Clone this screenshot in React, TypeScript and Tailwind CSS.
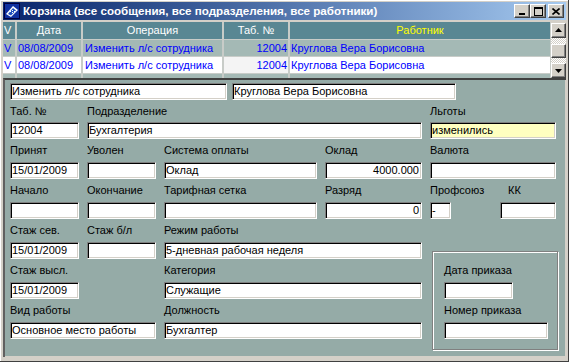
import clsx from 'clsx';
import type { ReactNode } from 'react';

function Field({
  children,
  className,
  right,
  yellow,
}: {
  children?: ReactNode;
  className?: string;
  right?: boolean;
  yellow?: boolean;
}) {
  return (
    <div
      className={clsx(
        'h-[17px] overflow-hidden whitespace-nowrap border border-t-[#808080] border-l-[#808080] border-r-white border-b-white pl-[1px] pr-[2px] text-[11px] leading-[15px] text-black shadow-[inset_1px_1px_0_#000,inset_-1px_-1px_0_#d4d0c8]',
        yellow ? 'bg-[#ffffc0]' : 'bg-white',
        right && 'text-right',
        className,
      )}
    >
      {children}
    </div>
  );
}

function Label({ children, className }: { children?: ReactNode; className?: string }) {
  return (
    <div className={clsx('flex items-center whitespace-nowrap text-[11px] leading-[13px] text-black', className)}>
      {children}
    </div>
  );
}

function TitleButton({ children }: { children: ReactNode }) {
  return (
    <div className="flex h-[14px] w-[16px] items-center justify-center border border-t-white border-l-white border-r-[#404040] border-b-[#404040] bg-[#d4d0c8] shadow-[inset_-1px_-1px_0_#808080]">
      {children}
    </div>
  );
}

function ScrollButton({ down }: { down?: boolean }) {
  return (
    <div className="flex h-[15px] w-[15px] items-center justify-center border border-t-white border-l-white border-r-[#404040] border-b-[#404040] bg-[#d4d0c8] shadow-[inset_-1px_-1px_0_#808080]">
      <svg width="7" height="4" viewBox="0 0 7 4">
        {down ? <path d="M0 0h7L3.5 4z" fill="#000" /> : <path d="M0 4h7L3.5 0z" fill="#000" />}
      </svg>
    </div>
  );
}

const rows = [
  { selected: true },
  { selected: false },
];

export default function App() {
  return (
    <div className="flex h-[362px] w-[569px] flex-col bg-[#d4d0c8] px-[3px] pt-[2px] font-['Liberation_Sans',Arial,sans-serif] shadow-[inset_-1px_-1px_0_#404040,inset_1px_1px_0_#fff]">
      {/* title bar */}
      <div className="flex h-[18px] items-center bg-gradient-to-r from-[#0a246a] to-[#a6caf0] pl-[1px] pr-[2px]">
        <svg width="16" height="16" viewBox="0 0 16 16" className="shrink-0">
          <rect x="0" y="0" width="16" height="16" fill="#000040" />
          <rect x="1" y="1" width="14" height="14" fill="#1030a0" />
          <path d="M2 11 L9 3 L14 7 L7 14 Z" fill="#fff" />
          <path d="M4 11 L9 5 L12 7.5 L7 12.5 Z" fill="#2050c0" />
          <rect x="6" y="8" width="1" height="1" fill="#fff" />
          <rect x="8" y="7" width="1" height="1" fill="#fff" />
          <rect x="8" y="9" width="1" height="1" fill="#fff" />
          <rect x="10" y="8" width="1" height="1" fill="#fff" />
        </svg>
        <div className="ml-[3px] flex-1 whitespace-nowrap text-[11.6px] font-bold leading-[18px] text-white">
          Корзина (все сообщения, все подразделения, все работники)
        </div>
        <div className="flex items-center">
          <TitleButton>
            <div className="mt-[6px] h-[2px] w-[6px] bg-black" />
          </TitleButton>
          <TitleButton>
            <div className="h-[9px] w-[9px] border border-t-2 border-black" />
          </TitleButton>
          <div className="w-[2px]" />
          <TitleButton>
            <svg width="8" height="7" viewBox="0 0 8 7">
              <path d="M0.5 0.5 L7.5 6.5 M7.5 0.5 L0.5 6.5" stroke="#000" strokeWidth="1.6" />
            </svg>
          </TitleButton>
        </div>
      </div>

      {/* grid */}
      <div className="mt-[2px] flex h-[56px] gap-[1px] bg-[#c8ccc8]">
        <div className="grid grid-cols-[12px_64px_139px_64px_260px] grid-rows-[17px_16px_16px_4px] gap-x-[2px] gap-y-[1px] text-[11px] leading-[16px]">
          <div className="bg-[#598793] pl-[1px] leading-[17px] text-white">V</div>
          <div className="bg-[#598793] text-center leading-[17px] text-white">Дата</div>
          <div className="bg-[#598793] text-center leading-[17px] text-white">Операция</div>
          <div className="bg-[#598793] text-center leading-[17px] text-white">Таб. №</div>
          <div className="bg-[#598793] text-center leading-[17px] text-[#ffff00]">Работник</div>
          {rows.map((r, i) => (
            <div key={i} className="contents text-[#0000ff]">
              <div className={clsx('pl-[1px]', r.selected ? 'bg-[#a4b9b5]' : 'bg-white')}>V</div>
              <div className={clsx('pl-[1px]', r.selected ? 'bg-[#a4b9b5]' : 'bg-white')}>08/08/2009</div>
              <div className={clsx('whitespace-nowrap pl-[2px]', r.selected ? 'bg-[#a4b9b5]' : 'bg-white')}>
                Изменить л/с сотрудника
              </div>
              <div className={clsx('pr-[1px] text-right', r.selected ? 'bg-[#a4b9b5]' : 'bg-[#f4f4f4]')}>12004</div>
              <div className={clsx('whitespace-nowrap pl-[1px]', r.selected ? 'bg-[#a4b9b5]' : 'bg-white')}>
                Круглова Вера Борисовна
              </div>
            </div>
          ))}
          <div className="bg-[#a4b9b5]" />
          <div className="bg-[#a4b9b5]" />
          <div className="bg-[#a4b9b5]" />
          <div className="bg-[#a4b9b5]" />
          <div className="bg-[#a4b9b5]" />
        </div>
        <div className="flex w-[15px] flex-col bg-[#d4d0c8] pt-[1px]">
          <ScrollButton />
          <div className="h-[6px] bg-[repeating-conic-gradient(#d4d0c8_0_25%,#fff_0_50%)] bg-[length:2px_2px]" />
          <div className="h-[15px] border border-t-white border-l-white border-r-[#404040] border-b-[#404040] bg-[#d4d0c8] shadow-[inset_-1px_-1px_0_#808080]" />
          <div className="h-[5px] bg-[repeating-conic-gradient(#d4d0c8_0_25%,#fff_0_50%)] bg-[length:2px_2px]" />
          <ScrollButton down />
        </div>
      </div>

      {/* form */}
      <div className="flex h-[279px] flex-col border-t-2 border-l-2 border-t-[#404040] border-l-[#606060] bg-[#95aba7] pl-[5px] pt-[3px] shadow-[inset_-1px_-1px_0_#d4d0c8]">
        <div className="flex gap-[5px]">
          <Field className="w-[217px]">Изменить л/с сотрудника</Field>
          <Field className="w-[224px]">Круглова Вера Борисовна</Field>
        </div>

        <div className="grid grid-cols-[69px_69px_153px_97px_128px] grid-rows-[22px_17px_23px_17px_23px_17px_23px_17px_23px_17px_23px_17px_11px] gap-x-2">
          <Label>Таб. №</Label>
          <Label className="col-span-3">Подразделение</Label>
          <Label>Льготы</Label>
          <Field>12004</Field>
          <Field className="col-span-3">Бухгалтерия</Field>
          <Field yellow className="w-[126px]">изменились</Field>

          <Label>Принят</Label>
          <Label>Уволен</Label>
          <Label>Система оплаты</Label>
          <Label>Оклад</Label>
          <Label>Валюта</Label>
          <Field>15/01/2009</Field>
          <Field />
          <Field>Оклад</Field>
          <Field right>4000.000</Field>
          <Field className="w-[126px]" />

          <Label>Начало</Label>
          <Label>Окончание</Label>
          <Label>Тарифная сетка</Label>
          <Label>Разряд</Label>
          <Label>
            <span className="w-[78px]">Профсоюз</span>
            <span>КК</span>
          </Label>
          <Field />
          <Field />
          <Field />
          <Field right>0</Field>
          <div className="flex gap-[49px]">
            <Field className="w-[21px]">-</Field>
            <Field className="w-[56px]" />
          </div>

          <Label>Стаж сев.</Label>
          <Label>Стаж б/л</Label>
          <Label className="col-span-2">Режим работы</Label>
          <div />
          <Field>15/01/2009</Field>
          <Field />
          <Field className="col-span-2">5-дневная рабочая неделя</Field>

          <div className="col-start-5 row-span-6 row-start-8 ml-[2px] mt-[9px] border border-[#808080] pl-[11px] pt-[7px] shadow-[inset_1px_1px_0_#fff,1px_1px_0_#fff]">
            <Label className="h-[23px]">Дата приказа</Label>
            <Field className="w-[69px]" />
            <Label className="h-[23px]">Номер приказа</Label>
            <Field className="w-[104px]" />
          </div>

          <Label>Стаж высл.</Label>
          <div />
          <Label className="col-span-2">Категория</Label>
          <Field>15/01/2009</Field>
          <div />
          <Field className="col-span-2">Служащие</Field>

          <Label className="col-span-2">Вид работы</Label>
          <Label className="col-span-2">Должность</Label>
          <Field className="col-span-2">Основное место работы</Field>
          <Field className="col-span-2">Бухгалтер</Field>
        </div>
      </div>
    </div>
  );
}
